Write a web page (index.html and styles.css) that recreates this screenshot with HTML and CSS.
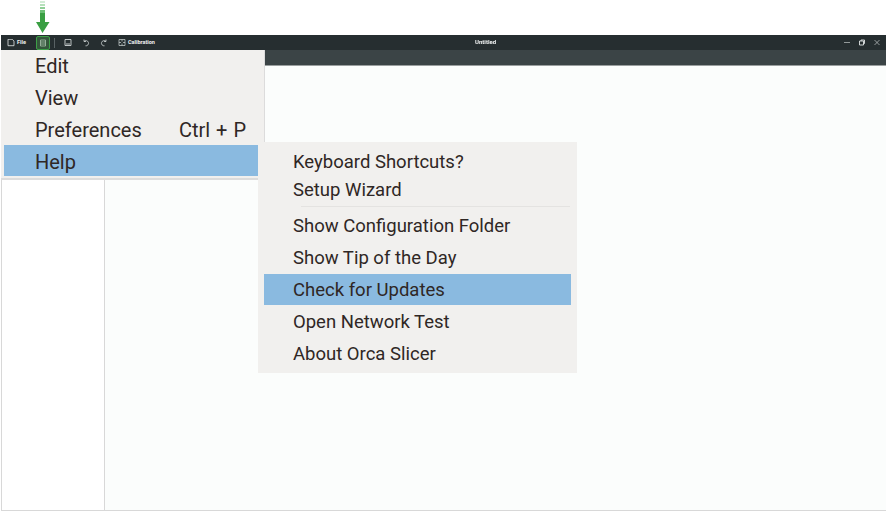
FILE: index.html
```html
<!DOCTYPE html>
<html lang="en">
<head>
<meta charset="utf-8">
<title>Untitled</title>
<link rel="stylesheet" href="styles.css">
</head>
<body>
<div class="callout">
  <svg class="arrow" width="14" height="34" viewBox="0 0 14 34">
    <rect x="4" y="1" width="5" height="2" fill="#d3ecd6"/>
    <rect x="4" y="4" width="5" height="2" fill="#b5e0ba"/>
    <rect x="4" y="7" width="5" height="2" fill="#8fcf96"/>
    <rect x="4" y="10" width="5" height="3" fill="#6cbf75"/>
    <path d="M4 13H9V22H13.500L6.500 33L0 22H4Z" fill="#3a9f43"/>
  </svg>
</div>
<div class="window">
  <header class="titlebar">
    <div class="tools">
      <span class="tool file">
        <svg class="ico" viewBox="0 .5 8 8"><path d="M1 .8H5.200L7 2.600V7.200H1Z" fill="none" stroke="#e4e8e8" stroke-width=".8"/></svg>
        <b>File</b>
      </span>
      <span class="tool menu-btn">
        <svg class="ico" viewBox="0 0 8 8"><path d="M1.500 1H6.500V7H1.500ZM1.500 3H6.500M1.500 5H6.500" fill="none" stroke="#a9c0ac" stroke-width=".8"/></svg>
      </span>
      <span class="divider"></span>
      <span class="tool save">
        <svg class="ico" viewBox="0 .5 8 8"><path d="M1 1H7V7H1ZM2 5.500H6" fill="none" stroke="#cfd5d5" stroke-width=".9"/></svg>
      </span>
      <span class="tool undo">
        <svg class="ico" viewBox="0 .5 8 8"><path d="M2 1L2 3H4M2 3A2.600 2.600 0 1 1 3.500 7.300" fill="none" stroke="#cfd5d5" stroke-width=".8"/></svg>
      </span>
      <span class="tool redo">
        <svg class="ico" viewBox="0 .5 8 8"><path d="M6 1L6 3H4M6 3A2.600 2.600 0 1 0 4.500 7.300" fill="none" stroke="#cfd5d5" stroke-width=".8"/></svg>
      </span>
      <span class="tool calib">
        <svg class="ico" viewBox="0 .5 8 8"><path d="M1 1H7V7H1ZM4 1V3M4 5V7M1 4H3M5 4H7" fill="none" stroke="#cfd5d5" stroke-width=".7"/></svg>
        <b>Calibration</b>
      </span>
    </div>
    <div class="doc-title">Untitled</div>
    <div class="win-controls">
      <svg class="ctl" viewBox="0 .5 8 8"><path d="M1 4H7" stroke="#aeb5b5" stroke-width=".8"/></svg>
      <svg class="ctl" viewBox="0 .5 8 8"><path d="M1.500 2.500H5.500V6.500H1.500ZM3 2.500V1.500H6.500V5H5.500" fill="none" stroke="#e0e4e4" stroke-width=".9"/></svg>
      <svg class="ctl" viewBox="0 .5 8 8"><path d="M1.500 1.500L6.500 6.500M6.500 1.500L1.500 6.500" stroke="#c4caca" stroke-width=".7"/></svg>
    </div>
  </header>
  <div class="subbar"></div>
  <main class="content">
    <aside class="sidebar"></aside>
    <section class="canvas"></section>
  </main>
</div>
<nav class="menu main-menu">
  <div class="item">Edit</div>
  <div class="item">View</div>
  <div class="item"><span>Preferences</span><span class="shortcut">Ctrl + P</span></div>
  <div class="item active">Help</div>
</nav>
<nav class="menu sub-menu">
  <div class="item short">Keyboard Shortcuts?</div>
  <div class="item short">Setup Wizard</div>
  <div class="sep"></div>
  <div class="item">Show Configuration Folder</div>
  <div class="item">Show Tip of the Day</div>
  <div class="item active">Check for Updates</div>
  <div class="item">Open Network Test</div>
  <div class="item">About Orca Slicer</div>
</nav>
</body>
</html>
```

FILE: styles.css
```css
* { box-sizing: border-box; }
html, body { margin: 0; height: 100%; }
body {
  background: #fff;
  font-family: "Roboto", sans-serif;
  overflow: hidden;
  display: flex;
  flex-direction: column;
  padding: 0 0 0 1px;
}
.callout { height: 35px; padding-left: 35px; flex: none; }
.arrow { display: block; }
.window {
  width: 885px;
  height: 476px;
  display: flex;
  flex-direction: column;
  border-bottom: 1px solid #d8d8d8;
}
.titlebar {
  height: 15px;
  background: #262e30;
  display: flex;
  align-items: center;
  flex: none;
  position: relative;
}
.tools { display: flex; align-items: center; height: 100%; }
.tool { display: flex; align-items: center; color: #eef0f0; }
.tool b { font-size: 5.500px; font-weight: 700; margin: 0 0 1px 2px; }
.ico { width: 8px; height: 8px; display: block; }
.file { margin-left: 6px; width: 29px; }
.menu-btn {
  width: 14px;
  height: 14px;
  margin-top: 1px;
  justify-content: center;
  background: #35573c;
  border: 1px solid #3da047;
  border-radius: 2px;
}
.divider { width: 1px; height: 10px; background: #596264; margin-left: 4px; }
.save { margin-left: 9px; }
.undo { margin-left: 10px; }
.redo { margin-left: 10px; }
.calib { margin-left: 10px; }
.doc-title {
  position: absolute;
  left: 474px;
  top: 0;
  line-height: 14px;
  color: #f0f2f2;
  font-size: 6px;
  font-weight: 700;
  will-change: transform;
}
.win-controls { margin-left: auto; display: flex; gap: 7px; padding-right: 5px; }
.ctl { width: 8px; height: 8px; display: block; }
.subbar {
  height: 16px;
  flex: none;
  background: #3b4446;
  border-bottom: 1px solid #9a9f9f;
}
.content { flex: 1; display: flex; min-height: 0; }
.sidebar {
  width: 104px;
  background: #fff;
  border-left: 1px solid #d8d8d8;
  border-right: 1px solid #d8d8d8;
}
.canvas { flex: 1; background: #fbfdfc; }
.menu {
  position: absolute;
  background: #f1f0ee;
  color: #2f2725;
}
.item {
  height: 32px;
  display: flex;
  align-items: center;
  justify-content: space-between;
  white-space: nowrap;
}
.item.active { background: #8abae0; height: 31px; margin-bottom: 1px; }
.item.short { height: 28px; }
.main-menu {
  left: 1px;
  top: 50px;
  width: 264px;
  height: 130px;
  padding: 0 0 0 3px;
  border-right: 1px solid #dcdcdc;
  border-bottom: 2px solid #dcdcdc;
  font-size: 20px;
}
.main-menu .item { padding: 0 18px 0 31px; }
.main-menu .active {
  width: 254px;
  margin-top: -1px;
  padding-top: 2px;
}
.shortcut { word-spacing: 1px; }
.sub-menu {
  left: 258px;
  top: 142px;
  width: 319px;
  height: 231px;
  padding: 6px 6px 0 6px;
  font-size: 18.500px;
}
.sub-menu .item { padding-left: 29px; }
.sep { height: 1px; background: #e4e3e1; margin: 2px 1px 3px 37px; }
```
